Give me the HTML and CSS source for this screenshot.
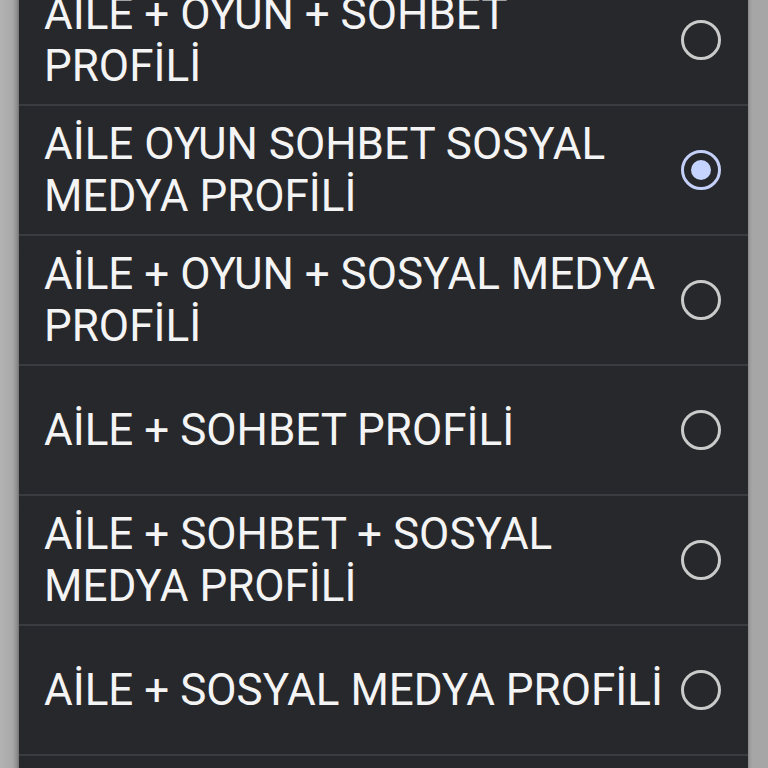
FILE: index.html
```html
<!DOCTYPE html>
<html lang="tr">
<head>
    <meta charset="UTF-8">
    <meta name="viewport" content="width=device-width, initial-scale=1.0">
    <title>Profil Seçimi</title>
    <link rel="stylesheet" href="styles.css">
</head>
<body>
    <div class="dialog">
        <ul class="options">
            <li class="option">
                <span class="label">AİLE + OYUN + SOHBET PROFİLİ</span>
                <span class="radio"></span>
            </li>
            <li class="option">
                <span class="label">AİLE OYUN SOHBET SOSYAL MEDYA PROFİLİ</span>
                <span class="radio checked"></span>
            </li>
            <li class="option">
                <span class="label">AİLE + OYUN + SOSYAL MEDYA PROFİLİ</span>
                <span class="radio"></span>
            </li>
            <li class="option">
                <span class="label">AİLE + SOHBET PROFİLİ</span>
                <span class="radio"></span>
            </li>
            <li class="option">
                <span class="label">AİLE + SOHBET + SOSYAL MEDYA PROFİLİ</span>
                <span class="radio"></span>
            </li>
            <li class="option">
                <span class="label">AİLE + SOSYAL MEDYA PROFİLİ</span>
                <span class="radio"></span>
            </li>
            <li class="option"></li>
        </ul>
    </div>
</body>
</html>
```
FILE: styles.css
```css
html, body {
    margin: 0;
    height: 100%;
    overflow: hidden;
}
body {
    font-family: Roboto, "Noto Sans", sans-serif;
    background: linear-gradient(to right, #b3b3b3 0, #a9a9a9 12px, #8c8c8c 19px, #a6a6a6 19px, #a6a6a6 100%);
}
.dialog {
    margin-left: 19px;
    width: 729px;
    background-color: #27282c;
    box-shadow: 0 0 4px rgba(0, 0, 0, 0.35);
}
.options {
    list-style: none;
    margin: -24px 0 0 0;
    padding: 0;
}
.option {
    display: flex;
    align-items: center;
    height: 128px;
    padding: 0 27px 0 25px;
    border-bottom: 2px solid #3b3c41;
}
.label {
    flex: 1;
    padding-right: 16px;
    color: #f4f4f4;
    font-size: 44px;
    line-height: 52px;
}
.radio {
    position: relative;
    flex: none;
    width: 40px;
    height: 40px;
    box-sizing: border-box;
    border: 3px solid #cacaca;
    border-radius: 50%;
}
.radio.checked {
    border-color: #c4d0f8;
}
.radio.checked::after {
    content: "";
    position: absolute;
    left: 7px;
    top: 7px;
    width: 20px;
    height: 20px;
    border-radius: 50%;
    background-color: #c4d3ff;
}
```
